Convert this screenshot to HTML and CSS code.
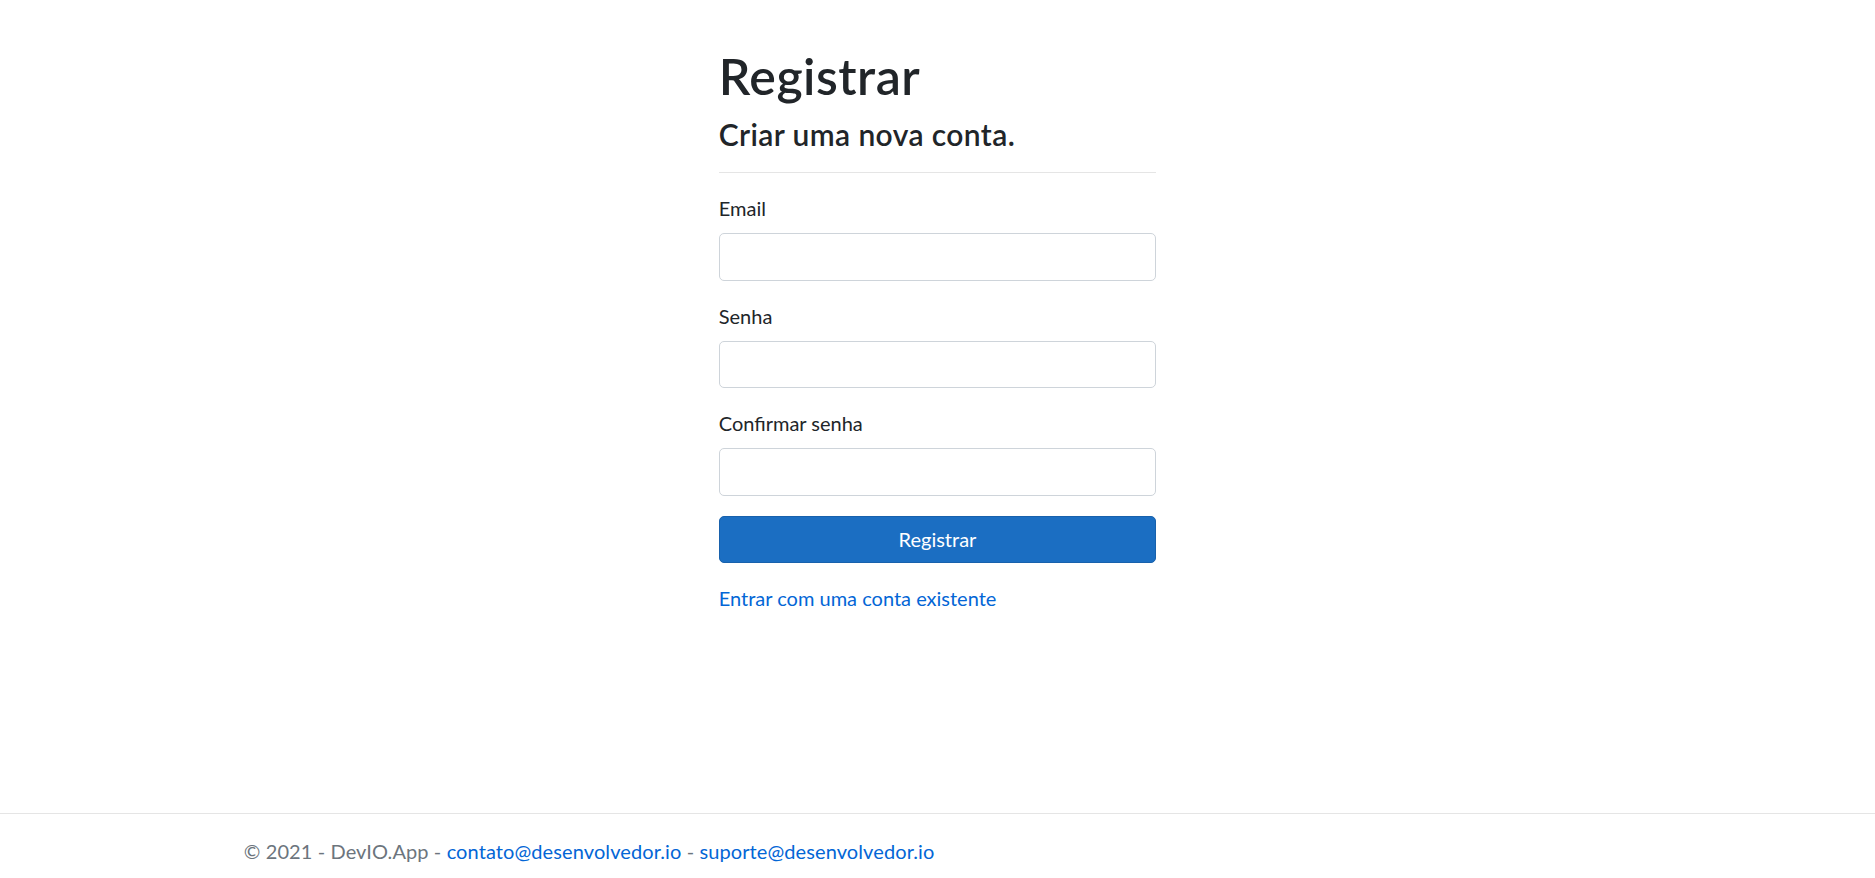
FILE: index.html
```html
<!DOCTYPE html>
<html lang="pt-br">
<head>
<meta charset="utf-8">
<title>Registrar</title>
<link rel="stylesheet" href="styles.css">
</head>
<body>
<main class="page">
  <div class="container">
    <div class="row">
      <div class="col-form">
        <h1 class="title">Registrar</h1>
        <h4 class="subtitle">Criar uma nova conta.</h4>
        <hr class="divider">
        <form class="form">
          <div class="form-group">
            <label class="form-label" for="email">Email</label>
            <input class="form-control" id="email" type="email">
          </div>
          <div class="form-group">
            <label class="form-label" for="senha">Senha</label>
            <input class="form-control" id="senha" type="password">
          </div>
          <div class="form-group">
            <label class="form-label" for="confirmar">Confirmar senha</label>
            <input class="form-control" id="confirmar" type="password">
          </div>
          <div class="form-group">
            <button type="button" class="btn-primary">Registrar</button>
          </div>
          <div class="form-group">
            <p class="link-line"><a class="link" href="#">Entrar com uma conta existente</a></p>
          </div>
        </form>
      </div>
    </div>
  </div>
</main>
<footer class="footer">
  <div class="container footer-inner">
    © 2021 - DevIO.App - <a class="link" href="#">contato@desenvolvedor.io</a> - <a class="link" href="#">suporte@desenvolvedor.io</a>
  </div>
</footer>
</body>
</html>
```
FILE: styles.css
```css
* { box-sizing: border-box; }

html, body { height: 100%; }

body {
  margin: 0;
  font-family: "Lato", "Noto Sans", sans-serif;
  font-size: 20px;
  line-height: 1.5;
  color: #212529;
  background: #fff;
  display: flex;
  flex-direction: column;
  min-height: 100vh;
  overflow: hidden;
}

.page {
  flex: 1 1 auto;
  padding-top: 46px;
}

.container {
  width: 1425px;
  margin: 0 auto;
  padding: 0 18.75px;
}

.row {
  display: flex;
  margin: 0 -18.75px;
}

.col-form {
  flex: 0 0 33.3333%;
  max-width: 33.3333%;
  margin-left: 33.3333%;
  padding: 0 18.75px;
}

.title {
  margin: 0 0 10px;
  font-size: 50px;
  font-weight: 600;
  line-height: 1.2;
  letter-spacing: 0.5px;
}

.subtitle {
  margin: 0 0 10px;
  font-size: 30px;
  font-weight: 600;
  line-height: 1.2;
  letter-spacing: 0.4px;
}

.divider {
  margin: 20px 0;
  border: 0;
  border-top: 1px solid rgba(0, 0, 0, 0.1);
  height: 0;
}

.form { margin: 0; }

.form-group { margin-bottom: 20px; }

.form-label {
  display: inline-block;
  margin-bottom: 10px;
}

.form-control {
  display: block;
  width: 100%;
  height: 47.5px;
  padding: 7.5px 15px;
  font: inherit;
  color: #495057;
  background: #fff;
  border: 1px solid #ced4da;
  border-radius: 5px;
  outline: none;
}

.btn-primary {
  display: block;
  width: 100%;
  padding: 7.5px 15px;
  font: inherit;
  line-height: 1.5;
  color: #fff;
  background: #1b6ec2;
  border: 1px solid #1861ac;
  border-radius: 5px;
  text-align: center;
  cursor: pointer;
}

.link-line { margin: 0; }

.link {
  color: #0366d6;
  text-decoration: none;
}

.footer {
  flex: 0 0 65px;
  height: 65px;
  border-top: 1px solid #e5e5e5;
  color: #6c757d;
  line-height: 75px;
  white-space: nowrap;
  overflow: hidden;
}

.footer-inner {
  letter-spacing: 0.1px;
}
```
